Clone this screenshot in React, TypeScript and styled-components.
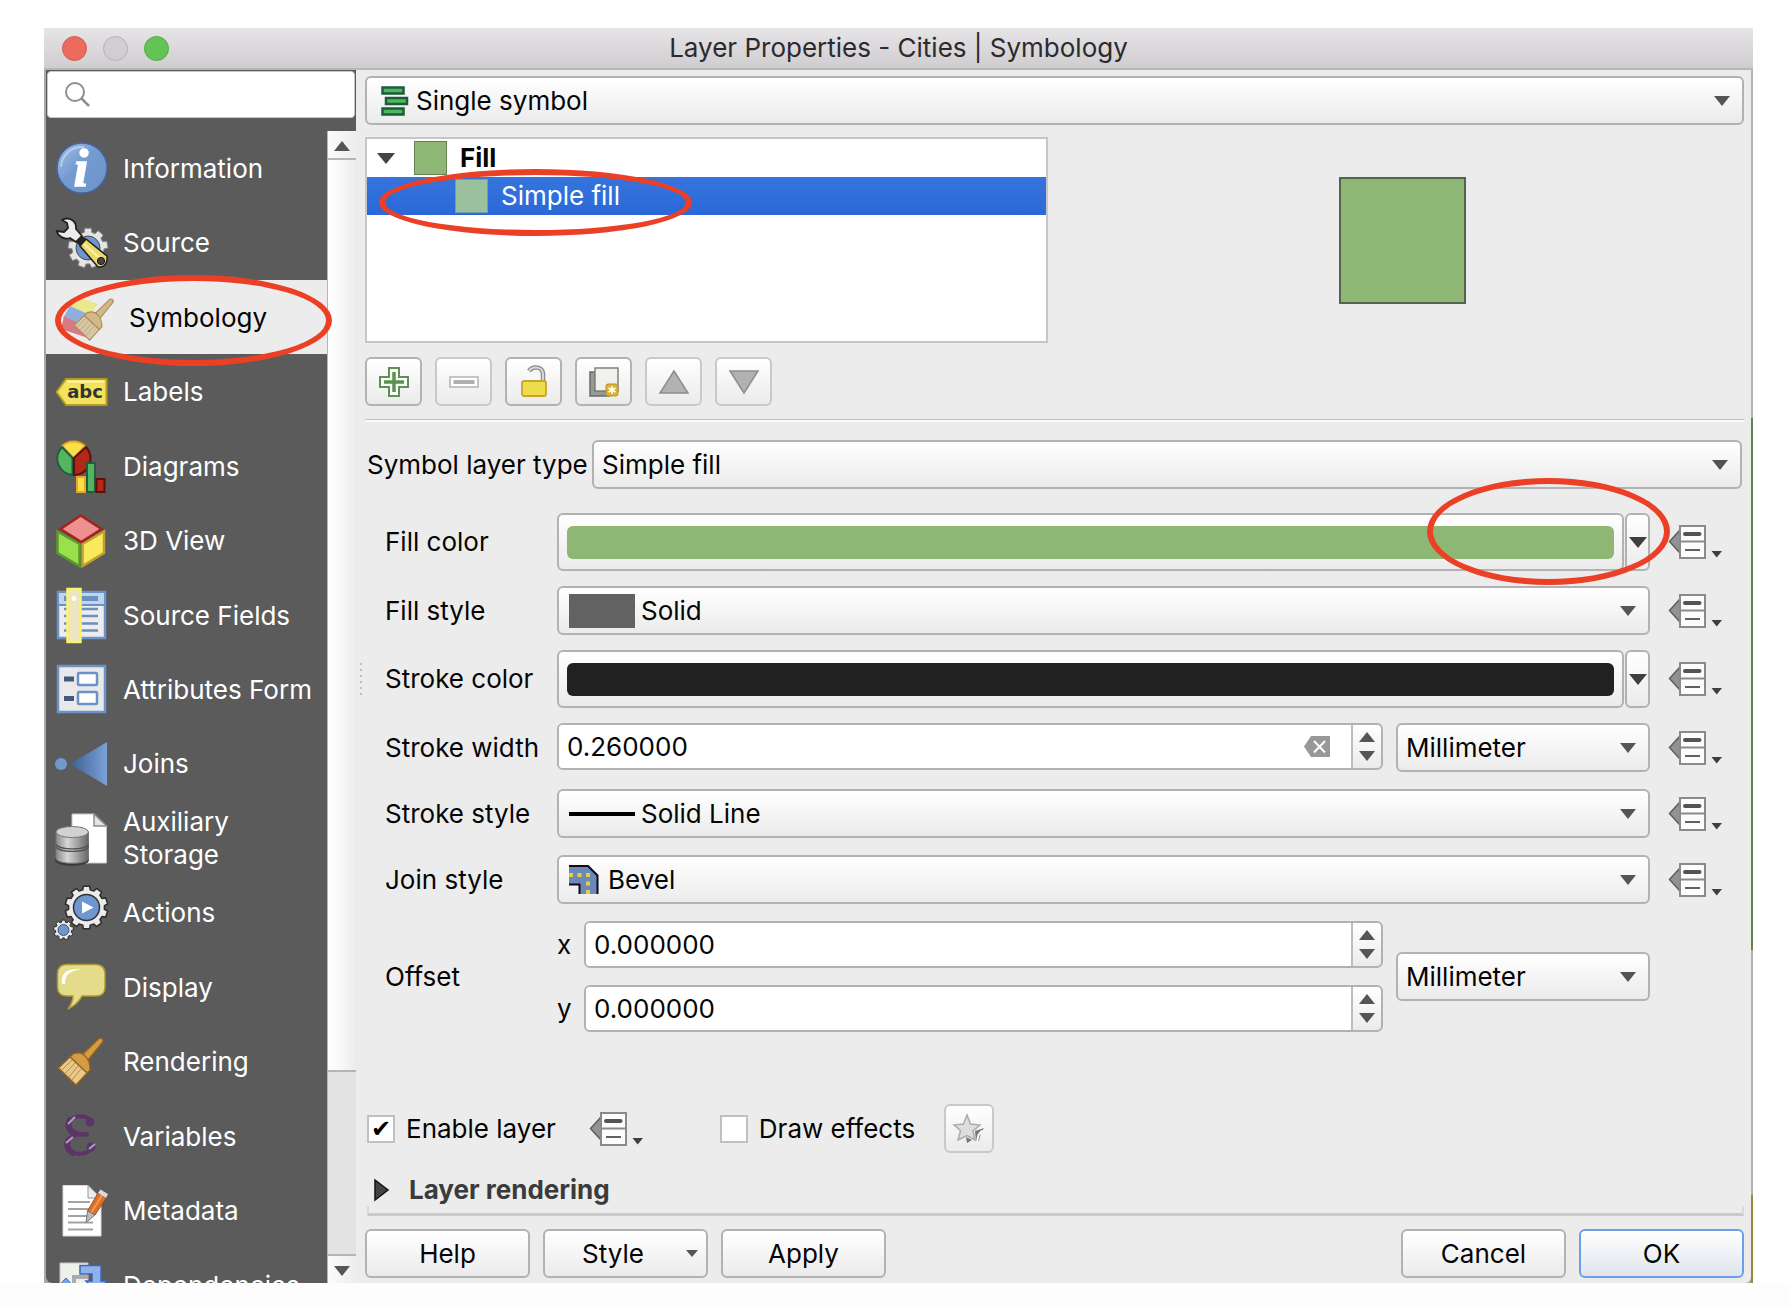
import React from "react";
import styled, { createGlobalStyle, css } from "styled-components";

const GlobalStyle = createGlobalStyle`
  *, *::before, *::after { box-sizing: border-box; }
  body { margin: 0; background: #fff; }
  body, button, input, select {
    font-family: Inter, "Liberation Sans", sans-serif;
    font-size: 26px;
    line-height: 32px;
    color: #050505;
  }
  button, input, select { margin: 0; padding: 0; border: 0; background: none; outline: none; }
  svg { display: block; overflow: visible; }
`;

/* ---------- window frame ---------- */

const Page = styled.div`
  min-height: 100vh;
  padding: 28px 37px 25px 44px;
  display: flex;
  background: linear-gradient(#fff 0 calc(100% - 25px), #fdfdfd calc(100% - 25px));
`;

const Window = styled.div`
  flex: 1;
  min-width: 0;
  display: flex;
  flex-direction: column;
  padding: 0 2px;
  background:
    linear-gradient(#d8d6d8 0 42px, #b4b4b4 42px 390px, #64814e 390px 922px, #b0b0b0 922px 1167px, #988741 1167px) right / 2px 100% no-repeat,
    #a8a8a8;
`;

const TitleBar = styled.header`
  height: 42px;
  margin: 0 -2px;
  display: grid;
  grid-template-columns: 1fr auto 1fr;
  align-items: center;
  padding: 0 18px;
  border-bottom: 2px solid #b8b6b8;
  background: linear-gradient(#e6e4e6, #cfcdcf);
`;

const Title = styled.h1`
  margin: 0;
  font-size: 26px;
  font-weight: 400;
  line-height: 32px;
  color: #2c2a2c;
`;

const Lights = styled.div`
  display: flex;
  gap: 16px;
`;

const Light = styled.button<{ $fill: string; $edge: string }>`
  width: 25px;
  height: 25px;
  border-radius: 50%;
  border: 1px solid ${(p) => p.$edge};
  background: ${(p) => p.$fill};
`;

const Body = styled.div`
  flex: 1;
  display: flex;
  background: #ececec;
  border-radius: 0 0 6px 6px;
  overflow: hidden;
`;

/* ---------- sidebar ---------- */

const Sidebar = styled.aside`
  width: 310px;
  flex: none;
  display: flex;
  flex-direction: column;
  background: #5b5b5b;
`;

const Search = styled.label`
  height: 47px;
  margin: 1px 1px 13px;
  padding: 0 17px;
  display: flex;
  align-items: center;
  gap: 10px;
  background: #fff;
  border: 1px solid #c8c8c8;
  border-radius: 4px;
`;

const SearchInput = styled.input`
  flex: 1;
  min-width: 0;
`;

const SidebarBody = styled.div`
  flex: 1;
  min-height: 0;
  display: flex;
`;

const NavArea = styled.div`
  position: relative;
  display: flex;
  flex: 1;
  min-width: 0;
`;

const NavList = styled.nav`
  flex: 1;
  display: grid;
  grid-template-rows: repeat(15, minmax(0, 1fr)) 35px;
  height: 100%;
  overflow: hidden;
`;

const NavItem = styled.a<{ $active?: boolean }>`
  min-height: 74px;
  display: flex;
  align-items: center;
  gap: 15px;
  padding-left: ${(p) => (p.$active ? 16 : 10)}px;
  line-height: 33px;
  text-decoration: none;
  color: ${(p) => (p.$active ? "#050505" : "#fff")};
  background: ${(p) => (p.$active ? "#ececec" : "transparent")};
  svg { flex: none; }
`;

const Scrollbar = styled.div`
  width: 29px;
  display: flex;
  flex-direction: column;
  border-left: 1px solid #b5b5b5;
  background: #e3e3e3;
`;

const ScrollButton = styled.button`
  height: 27px;
  padding-top: 3px;
  display: grid;
  place-items: center;
  background: linear-gradient(90deg, #fbfbfb, #ededed);
`;

const ScrollTrack = styled.div`
  flex: 1;
  padding-bottom: 182px;
  border-top: 2px solid #b5b5b5;
  border-bottom: 2px solid #b5b5b5;
`;

const ScrollThumb = styled.div`
  height: 100%;
  border-bottom: 2px solid #b5b5b5;
  background: linear-gradient(90deg, #fff, #fafafa 40%, #ebebeb);
`;

/* ---------- main panel ---------- */

const Main = styled.main`
  flex: 1;
  min-width: 0;
  display: flex;
  flex-direction: column;
  padding: 6px 7px 4px 9px;
`;

const raised = css`
  border: 2px solid #b2b2b2;
  border-radius: 6px;
  background: linear-gradient(#fff, #ebebeb);
`;

const ComboBox = styled.div`
  ${raised}
  flex: 1;
  min-width: 0;
  height: 49px;
  display: grid;
  grid-template-columns: minmax(0, 1fr) auto;
  align-items: center;
`;

const ComboSelect = styled.select<{ $pad: number }>`
  grid-area: 1 / 1 / 2 / 3;
  width: 100%;
  height: 100%;
  appearance: none;
  padding-left: ${(p) => p.$pad}px;
`;

const ComboIcon = styled.span`
  grid-area: 1 / 1;
  padding-left: 10px;
  pointer-events: none;
`;

const ComboArrow = styled.span`
  grid-area: 1 / 2;
  padding-right: 12px;
  pointer-events: none;
`;

const RendererRow = styled.div`
  display: flex;
`;

const TopSplit = styled.div`
  display: grid;
  grid-template-columns: 1fr 1fr;
  gap: 14px;
  margin: 12px 0 14px;
`;

const Tree = styled.ul`
  height: 206px;
  margin: 0;
  padding: 0;
  list-style: none;
  background: #fff;
  border: 2px solid #c6c6c6;
`;

const TreeRow = styled.li<{ $selected?: boolean }>`
  position: relative;
  height: 38px;
  display: flex;
  align-items: center;
  gap: 13px;
  padding-left: ${(p) => (p.$selected ? 88 : 10)}px;
  font-weight: ${(p) => (p.$selected ? 400 : 700)};
  color: ${(p) => (p.$selected ? "#fff" : "#050505")};
  background: ${(p) => (p.$selected ? "linear-gradient(#3674dc, #2b68d8)" : "none")};
`;

const TreeSwatch = styled.span<{ $fill: string; $edge: string }>`
  width: 33px;
  height: 34px;
  border: 1px solid ${(p) => p.$edge};
  background: ${(p) => p.$fill};
`;

const TreeToggle = styled.button`
  margin-right: 6px;
`;

const Preview = styled.div`
  display: grid;
  place-items: center;
`;

const PreviewSwatch = styled.div`
  width: 127px;
  height: 127px;
  border: 2px solid #56634d;
  background: #8eb674;
`;

const Toolbar = styled.div`
  display: flex;
  gap: 13px;
`;

const ToolButton = styled.button<{ $small?: boolean }>`
  ${raised}
  width: ${(p) => (p.$small ? 50 : 57)}px;
  height: 49px;
  display: grid;
  place-items: center;
  &:disabled { border-color: #c9c9c9; }
`;

const Divider = styled.hr`
  width: 100%;
  height: 3px;
  margin: 13px 0 18px;
  border: 0;
  border-top: 1px solid #c2c2c2;
  background: #fafafa;
`;

const TypeRow = styled.div`
  display: flex;
  align-items: center;
  padding: 0 2px;
  margin-bottom: 24px;
`;

const TypeLabel = styled.label`
  width: 225px;
  flex: none;
  white-space: nowrap;
`;

const FormArea = styled.div`
  display: grid;
  grid-template-columns: 20px minmax(0, 1fr);
  align-items: center;
`;

const Grip = styled.div`
  width: 2px;
  height: 36px;
  margin: 0 0 184px -5px;
  background: repeating-linear-gradient(#bcbcbc 0 2px, transparent 2px 6px);
`;

const FormBody = styled.div`
  display: flex;
  flex-direction: column;
  gap: 15px;
`;

const FormGroup = styled.div<{ $gap: number }>`
  display: flex;
  flex-direction: column;
  gap: ${(p) => p.$gap}px;
`;

const FormRow = styled.div`
  display: grid;
  grid-template-columns: 172px minmax(0, 1fr) 94px;
  align-items: center;
`;

const Field = styled.div`
  position: relative;
  min-width: 0;
  display: flex;
  gap: 1px;
`;

const SplitField = styled.div<{ $center?: boolean }>`
  display: grid;
  grid-template-columns: minmax(0, 1fr) 254px;
  gap: 13px;
  align-items: ${(p) => (p.$center ? "center" : "start")};
`;

const ColorButton = styled.button`
  ${raised}
  flex: 1;
  height: 58px;
  padding: 0 8px;
  display: flex;
  align-items: center;
`;

const ColorSwatch = styled.span<{ $fill: string }>`
  flex: 1;
  height: 33px;
  border-radius: 6px;
  background: ${(p) => p.$fill};
`;

const ColorMenu = styled.button`
  ${raised}
  width: 25px;
  height: 58px;
  display: flex;
  align-items: center;
  justify-content: center;
`;

const SpinBox = styled.div`
  ${raised}
  flex: 1;
  min-width: 0;
  height: 47px;
  display: flex;
  overflow: hidden;
`;

const SpinInput = styled.input`
  flex: 1;
  min-width: 0;
  padding-left: 8px;
  background: #fff;
`;

const ClearButton = styled.button`
  padding-right: 21px;
  background: #fff;
`;

const Stepper = styled.div`
  width: 30px;
  display: flex;
  flex-direction: column;
  justify-content: center;
  align-items: center;
  gap: 9px;
  border-left: 2px solid #bdbdbd;
`;

const StepButton = styled.button`
  display: block;
`;

const AxisList = styled.div`
  display: flex;
  flex-direction: column;
  gap: 17px;
`;

const AxisRow = styled.div`
  display: flex;
  align-items: center;
`;

const AxisLabel = styled.label`
  width: 27px;
`;

const OverrideButton = styled.button`
  width: 53px;
  margin-left: 19px;
`;

const OptionsRow = styled.div`
  height: 49px;
  margin-top: 72px;
  padding-left: 2px;
  display: flex;
  align-items: center;
`;

const CheckLabel = styled.label`
  display: flex;
  align-items: center;
  gap: 11px;
`;

const CheckBox = styled.input`
  appearance: none;
  width: 28px;
  height: 28px;
  border: 2px solid #c0c0c0;
  background: #fff;
  display: grid;
  place-items: center;
  &:checked::after {
    content: "✔";
    font-family: "DejaVu Sans", sans-serif;
    font-size: 24px;
    line-height: 24px;
    color: #000;
  }
`;

const OptionGap = styled.div<{ $w: number }>`
  width: ${(p) => p.$w}px;
`;

const RenderingToggle = styled.button`
  margin-top: 21px;
  height: 32px;
  padding-left: 9px;
  display: flex;
  align-items: center;
  gap: 20px;
  font-weight: 700;
  color: #3b3b3b;
`;

const Ledge = styled.div`
  height: 10px;
  margin: 0 0 13px 2px;
  border: 2px solid #dadada;
  border-top: 0;
  border-bottom: 3px solid #cacaca;
`;

const Footer = styled.footer`
  display: flex;
  gap: 13px;
`;

const FooterButton = styled.button<{ $primary?: boolean }>`
  ${raised}
  width: 165px;
  height: 49px;
  ${(p) =>
    p.$primary &&
    css`
      border-color: #6c9fe8;
      background: linear-gradient(#fff, #e0e4ec);
    `}
`;

const MenuFooterButton = styled(FooterButton)`
  display: flex;
  align-items: center;
  justify-content: space-between;
  padding: 0 8px 0 37px;
`;

const FooterSpace = styled.div`
  flex: 1;
`;

/* Hand-drawn ring laid over the control it points at */
const Ring = styled.span<{ $x: number; $y: number; $w: number; $h: number; $right?: boolean }>`
  position: absolute;
  z-index: 2;
  ${(p) => (p.$right ? "right" : "left")}: ${(p) => p.$x}px;
  top: ${(p) => p.$y}px;
  width: ${(p) => p.$w}px;
  height: ${(p) => p.$h}px;
  border: 6px solid #eb4025;
  border-radius: 50%;
  pointer-events: none;
`;

/* ---------- small glyphs ---------- */

const Tri = ({ w = 16, h = 10, up = false, fill = "#555" }: { w?: number; h?: number; up?: boolean; fill?: string }) => (
  <svg width={w} height={h} aria-hidden="true">
    <polygon points={up ? `0,${h} ${w / 2},0 ${w},${h}` : `0,0 ${w},0 ${w / 2},${h}`} fill={fill} />
  </svg>
);

const gear = (cx: number, cy: number, outer: number, inner: number, teeth: number) => {
  const pts: string[] = [];
  const step = (Math.PI * 2) / teeth;
  for (let i = 0; i < teeth; i++) {
    const a = i * step - Math.PI / 2;
    [
      [-0.33, inner],
      [-0.24, outer],
      [0.24, outer],
      [0.33, inner],
    ].forEach(([k, r]) => pts.push(`${(cx + r * Math.cos(a + k * step)).toFixed(1)},${(cy + r * Math.sin(a + k * step)).toFixed(1)}`));
  }
  return pts.join(" ");
};

const Icon = ({ children }: { children: React.ReactNode }) => (
  <svg width="52" height="52" viewBox="0 0 52 52" aria-hidden="true">
    {children}
  </svg>
);

const InfoIcon = () => (
  <Icon>
    <defs>
      <linearGradient id="infoShine" x1="0" y1="0" x2="1" y2="1">
        <stop offset="0" stopColor="#a5c0e6" />
        <stop offset="0.45" stopColor="#739bd1" />
        <stop offset="1" stopColor="#6c94cb" />
      </linearGradient>
    </defs>
    <circle cx="26" cy="26" r="25" fill="url(#infoShine)" stroke="#46669f" strokeWidth="1.5" />
    <path d="M5 25C6 12 16 4 28 5" fill="none" stroke="#b9cdea" strokeWidth="2" />
    <text x="25" y="44" textAnchor="middle" fontFamily="Liberation Serif, serif" fontStyle="italic" fontWeight="700" fontSize="52" fill="#fff" stroke="#fff" strokeWidth="1.6">
      i
    </text>
  </Icon>
);

const SourceIcon = () => (
  <Icon>
    <polygon points={gear(32, 31, 20, 16, 9)} fill="#e4e4e4" stroke="#8a8a8a" />
    <circle cx="32" cy="31" r="12" fill="#6f97cf" stroke="#4a4a4a" />
    <path d="M6 3C13-1 21 4 20 12L26 19L20 25L14 21C8 23 2 19 0.5 14L8 15L12 11L11 6Z" fill="#ececec" stroke="#222" strokeWidth="1.8" strokeLinejoin="round" />
    <path d="M20 25L26 19L30 22L24 29Z" fill="#222" />
    <path d="M24 29L30 22L51 39C52 45 49 51 42 50Z" fill="#ecd96a" stroke="#222" strokeWidth="1.6" />
    <path d="M28 27L46 43" stroke="#fbf2a8" strokeWidth="2" />
    <circle cx="45" cy="44" r="3.6" fill="#444" stroke="#111" />
  </Icon>
);

const Brush = ({ wood, dark, hair }: { wood: string; dark: string; hair: string }) => (
  <>
    <path d="M43 2.5Q47 1.5 47 5.5L32 24L26 19Z" fill={wood} stroke={dark} strokeWidth="1.3" />
    <path d="M17 18Q25 15 29 20Q34 24 34 34L31 37L14 21Z" fill={wood} stroke={dark} strokeWidth="1.3" />
    <path d="M14 21L31 37L20 49L2.5 32Z" fill={hair} stroke={dark} strokeWidth="1.3" />
    <path d="M16 24L6 34M19 27L9.5 37M22 30L13 41M25 33L16 44" stroke={dark} strokeWidth="1" opacity="0.6" />
  </>
);

const SymbologyIcon = () => (
  <Icon>
    <path d="M6 20L14 5L36 13L26 26Z" fill="#e9e88c" />
    <path d="M1 27L8 15L28 24L20 36Z" fill="#8fb0dc" />
    <path d="M-1 38L2 25L24 36L26 47Z" fill="#d97a80" />
    <g transform="translate(10 6) scale(0.88)">
      <Brush wood="#d3b98a" dark="#a98f60" hair="#d8c7a4" />
    </g>
  </Icon>
);

const LabelsIcon = () => (
  <Icon>
    <path d="M0.5 26L10 13H50.5V39H10Z" fill="#f3e35c" stroke="#b89a22" strokeWidth="2" strokeLinejoin="round" />
    <path d="M11 15.5H48" stroke="#fbf6ae" strokeWidth="2" />
    <text x="29" y="32" textAnchor="middle" fontFamily="DejaVu Sans, sans-serif" fontWeight="700" fontSize="18" fill="#333">
      abc
    </text>
  </Icon>
);

const DiagramsIcon = () => (
  <Icon>
    <path d="M17.5 18L6 6A17 17 0 0 1 29 6Z" fill="#fbdf46" stroke="#e8a62c" strokeWidth="2" />
    <path d="M16.5 18V35A16.5 16.5 0 0 1 6 7Z" fill="#55b45f" stroke="#215c3b" strokeWidth="2" />
    <path d="M18 18L30 7A16.5 16.5 0 0 1 18 35Z" fill="#b32917" stroke="#5f100c" strokeWidth="2" />
    <rect x="21" y="37" width="8" height="15" fill="#fbdf46" stroke="#e8a62c" strokeWidth="2" />
    <rect x="31" y="23" width="8" height="29" fill="#55b45f" stroke="#215c3b" strokeWidth="2" />
    <rect x="40.5" y="39" width="8" height="13" fill="#b32917" stroke="#5f100c" strokeWidth="2" />
  </Icon>
);

const CubeIcon = () => (
  <Icon>
    <path d="M1.5 16.5L23.5 29V51L1.5 38Z" fill="#9be04a" stroke="#5b9a2c" strokeWidth="2.5" />
    <path d="M26.5 29L48 16.5V38L26.5 51Z" fill="#fbe95c" stroke="#c0a030" strokeWidth="2.5" />
    <path d="M24.7 0.5L45.5 14L25.3 27L4.5 14Z" fill="#ec9090" stroke="#a3241a" strokeWidth="2.5" />
  </Icon>
);

const FieldsIcon = () => (
  <Icon>
    <rect x="2" y="3" width="47" height="46" fill="#ededed" stroke="#6c92c8" strokeWidth="2.5" />
    <rect x="3" y="4" width="45" height="11" fill="#bcd6ee" />
    <path d="M2 16H49" stroke="#6c92c8" strokeWidth="2" />
    <path d="M8 9.5H42" stroke="#6c8fc2" strokeWidth="5" />
    <path d="M8 20H42M8 27H42M8 34.5H42M8 41.5H42" stroke="#6f8fbd" strokeWidth="2.5" />
    <rect x="11.5" y="0" width="13" height="53" fill="#ece5bd" stroke="#fbf36a" strokeWidth="2.5" />
    <circle cx="18" cy="9.5" r="2.5" fill="#fff" />
  </Icon>
);

const FormIcon = () => (
  <Icon>
    <rect x="2" y="3" width="47" height="46" fill="#e9e9e9" stroke="#6c92c8" strokeWidth="2.5" />
    <rect x="22" y="10" width="19" height="12" rx="1" fill="#fff" stroke="#6c92c8" strokeWidth="2.5" />
    <rect x="22" y="29" width="19" height="12" rx="1" fill="#fff" stroke="#6c92c8" strokeWidth="2.5" />
    <path d="M8 16H18M8 35.5H18" stroke="#445877" strokeWidth="5" />
  </Icon>
);

const JoinsIcon = () => (
  <Icon>
    <defs>
      <linearGradient id="joinFade">
        <stop offset="0" stopColor="#3c5f93" />
        <stop offset="1" stopColor="#7ca1d6" />
      </linearGradient>
    </defs>
    <circle cx="5" cy="26" r="6" fill="#7199d0" />
    <path d="M14 26L51 4V48Z" fill="url(#joinFade)" />
  </Icon>
);

const StorageIcon = () => (
  <Icon>
    <defs>
      <linearGradient id="steel">
        <stop offset="0" stopColor="#888" />
        <stop offset="0.35" stopColor="#d6d6d6" />
        <stop offset="1" stopColor="#666" />
      </linearGradient>
    </defs>
    <path d="M16 2H38L50.5 14V51H16Z" fill="#fff" stroke="#c8c8c8" />
    <path d="M38 2V14H50.5Z" fill="#e4e4e4" stroke="#8d8d8d" strokeWidth="1.5" />
    <ellipse cx="16" cy="48" rx="17" ry="6" fill="#3c3c3c" />
    <path d="M0 20V46C0 53 32.5 53 32.5 46V20Z" fill="url(#steel)" stroke="#777" />
    <path d="M0 32C2 38.5 31 38.5 32.5 32M0 34.5C2 41 31 41 32.5 34.5" fill="none" stroke="#555" strokeWidth="1.2" />
    <ellipse cx="16.2" cy="20" rx="16.2" ry="5.5" fill="#d2d2d2" stroke="#777" />
  </Icon>
);

const ActionsIcon = () => (
  <Icon>
    <polygon points={gear(30.5, 20.5, 21.5, 18, 10)} fill="#ececec" stroke="#2c2c2c" strokeWidth="1.5" strokeLinejoin="round" />
    <circle cx="30.5" cy="20.5" r="13" fill="#6f97cf" stroke="#333" strokeWidth="1.5" />
    <path d="M26 14.5L37.5 20.5L26 26.5Z" fill="#fff" />
    <polygon points={gear(7.5, 43, 10, 8, 9)} fill="#ececec" stroke="#2c2c2c" />
    <circle cx="7.5" cy="43" r="5.5" fill="#6f97cf" stroke="#456" />
  </Icon>
);

const DisplayIcon = () => (
  <Icon>
    <path d="M11 3.5H39Q49 3.5 49 13V26Q49 35 40 35H26Q22 43 12 48Q17 41 17 35H11Q1.5 35 1.5 26V13Q1.5 3.5 11 3.5Z" fill="#e4dc8b" stroke="#ad9a35" strokeWidth="1.5" />
    <path d="M6 23C5 13 9 7 26 8.5C14 9.5 9 13 9 23Z" fill="#fff" />
  </Icon>
);

const RenderingIcon = () => (
  <Icon>
    <Brush wood="#d59b45" dark="#94661c" hair="#e9c88a" />
  </Icon>
);

/* Script epsilon drawn as two open bowls ending in round drops */
const VariablesIcon = () => (
  <Icon>
    <g fill="none" stroke="#5b3468" strokeLinecap="round">
      <path d="M34 10C28 4 15 5 13 14C12 21 20 25 31 24.500" strokeWidth="4" />
      <path d="M31 24.500C18 23 10 28 11 35C12 45 29 47 36 38" strokeWidth="4" />
      <path d="M14 10C11 15 13 20 17 22M12 31C10 37 13 41 17 43" strokeWidth="6" />
    </g>
    <circle cx="34" cy="12" r="4.5" fill="#5b3468" />
    <circle cx="35" cy="37" r="4.5" fill="#5b3468" />
    <path d="M12 14L19 7M10 33L17 27M33 39L39 34" stroke="#b79cc2" strokeWidth="2" />
  </Icon>
);

const MetadataIcon = () => (
  <Icon>
    <path d="M7 0.5H32L45 14V51H7Z" fill="#fff" stroke="#d8d8d8" />
    <path d="M32 0.5V13H45Z" fill="#ececec" stroke="#999" />
    <path d="M12 17H34M12 24H33M12 31H31M12 37.5H37M12 44.5H37" stroke="#a2a2a2" strokeWidth="2.2" />
    <path d="M42 8L50 13L39 30L31.5 26Z" fill="#dd6f2b" stroke="#a84d18" />
    <path d="M46 10.5L35 28" stroke="#f09a50" strokeWidth="2" />
    <path d="M42 8L44.5 4.5L52 9L50 13Z" fill="#d9d9d9" />
    <path d="M31.5 26L39 30L30 37.5Z" fill="#bdbdbd" stroke="#777" />
  </Icon>
);

const DependenciesIcon = () => (
  <Icon>
    <path d="M4 4H32V50H4Z" fill="#eef0ea" stroke="#c4c4c0" />
    <path d="M18 52V18H32" fill="none" stroke="#aaa" strokeWidth="4" />
    <path d="M24 6.5H45V22H51L41 34L30 22H36V15H24Z" fill="#8fb1ee" stroke="#3f66b4" strokeWidth="1.5" />
    <path d="M0 30L10 19L20 30Z" fill="#7aa2ea" stroke="#3f66b4" />
  </Icon>
);

const OverrideIcon = () => (
  <svg width="53" height="34" viewBox="0 0 53 34" aria-hidden="true">
    <path d="M11 5V28L0.5 16.5Z" fill="#909296" stroke="#5f5f5f" strokeWidth="1.5" />
    <rect x="11" y="1" width="25" height="32" fill="#fcfcfc" stroke="#8b8b86" strokeWidth="2" />
    <path d="M11 16.5H36" stroke="#8b8b86" strokeWidth="2" />
    <path d="M16 9H30.5" stroke="#525458" strokeWidth="4" strokeLinecap="round" />
    <path d="M16 25H31" stroke="#5f6165" strokeWidth="2" />
    <path d="M42.5 26H53L47.7 32.5Z" fill="#3e3e3e" />
  </svg>
);

const SingleSymbolIcon = () => (
  <svg width="31" height="30" viewBox="-4 0 31 30" aria-hidden="true">
    <g fill="#4fb85c" stroke="#1d5b3b" strokeWidth="2.5">
      <rect x="1.5" y="1.5" width="21" height="6" />
      <rect x="5" y="12" width="21" height="6" />
      <rect x="1.5" y="22.5" width="21" height="6" />
    </g>
  </svg>
);

const SolidIcon = () => (
  <svg width="67" height="34" aria-hidden="true">
    <rect width="66" height="34" fill="#626262" />
  </svg>
);

const LineIcon = () => (
  <svg width="67" height="4" aria-hidden="true">
    <rect width="66" height="4" fill="#000" />
  </svg>
);

const BevelIcon = () => (
  <svg width="29" height="29" viewBox="0 0 29 29" aria-hidden="true">
    <path d="M0 1H19L28 10V29H10V19H0Z" fill="#6c88ba" />
    <path d="M0 1H19L28.5 10.5V29M0 19.5H10.5V29" fill="none" stroke="#0c0c0c" strokeWidth="2" />
    <g fill="#e2cf3a">
      <rect x="0" y="8" width="4" height="4" />
      <rect x="8.5" y="8" width="4" height="4" />
      <rect x="17" y="8" width="4" height="4" />
      <rect x="17" y="16.5" width="4" height="4" />
      <rect x="17" y="25" width="4" height="4" />
    </g>
  </svg>
);

const ClearIcon = () => (
  <svg width="26" height="21" viewBox="0 0 26 21" aria-hidden="true">
    <path d="M0 10.5L7 0H26V21H7Z" fill="#989898" />
    <path d="M10 5L21 16.5M21 5L10 16.5" stroke="#fff" strokeWidth="2" />
  </svg>
);

const PlusIcon = () => (
  <svg width="30" height="30" viewBox="0 0 30 30" aria-hidden="true">
    <path d="M10 1H20V10H29V20H20V29H10V20H1V10H10Z" fill="#fff" stroke="#5d9154" strokeWidth="2" />
    <path d="M15 5V25M5 15H25" stroke="#5a9150" strokeWidth="3.5" />
  </svg>
);

const MinusIcon = () => (
  <svg width="30" height="12" viewBox="0 0 30 12" aria-hidden="true">
    <rect x="1" y="1" width="28" height="10" fill="#fff" stroke="#b4b4b4" strokeWidth="1.5" />
    <rect x="4.5" y="4" width="21" height="4" fill="#b0b0b0" />
  </svg>
);

const LockIcon = () => (
  <svg width="26" height="31" viewBox="0 0 26 31" aria-hidden="true">
    <path d="M8 5C12-1 22 1 22 8V15" fill="none" stroke="#8c8c88" strokeWidth="4.5" />
    <path d="M8 5C12-1 22 1 22 8V15" fill="none" stroke="#d8d8d4" strokeWidth="2" />
    <rect x="1" y="15" width="24" height="15" rx="2" fill="#eede4c" stroke="#c7a52e" strokeWidth="1.8" />
  </svg>
);

const DuplicateIcon = () => (
  <svg width="30" height="30" viewBox="0 0 30 30" aria-hidden="true">
    <path d="M1 5H6V24H20V29H1Z" fill="#9a9a94" stroke="#6b6b66" strokeWidth="1.5" />
    <rect x="6" y="1" width="23" height="23" fill="#f0f0ec" stroke="#82827c" strokeWidth="1.5" />
    <rect x="17" y="17" width="12" height="12" rx="2" fill="#dcb52f" stroke="#b8922a" />
    <path d="M23 19V27M19.5 21L26.5 25M26.5 21L19.5 25" stroke="#fff" strokeWidth="1.5" />
  </svg>
);

const MoveIcon = ({ down }: { down?: boolean }) => (
  <svg width="30" height="24" viewBox="0 0 30 24" aria-hidden="true">
    <path d={down ? "M1 1H29L15 23Z" : "M1 23H29L15 1Z"} fill="#b2b2b2" stroke="#8d8d8d" strokeWidth="1.5" />
  </svg>
);

const EffectsIcon = () => (
  <svg width="32" height="32" viewBox="0 0 32 32" aria-hidden="true">
    <path d="M13 24L19 27L14 30Z" fill="#777" />
    <path d="M22 18L31 15L28 19L26 28L23 29Z" fill="#777" />
    <path d="M14 2L17.5 11L27 12L20 18L22 27L14 22.5L5 27L7.5 17.5L1 12L10.5 11Z" fill="#dedede" stroke="#ababab" strokeWidth="1.5" />
    <path d="M24 29L25.500 22L29 17.500" fill="none" stroke="#fff" strokeWidth="2" />
  </svg>
);

/* ---------- composed controls ---------- */

const Combo = ({ id, label, value, icon, pad = 8 }: { id: string; label?: string; value: string; icon?: React.ReactNode; pad?: number }) => (
  <ComboBox>
    <ComboSelect id={id} $pad={pad} aria-label={label} defaultValue={value}>
      <option>{value}</option>
    </ComboSelect>
    {icon && <ComboIcon>{icon}</ComboIcon>}
    <ComboArrow>
      <Tri />
    </ComboArrow>
  </ComboBox>
);

const Spin = ({ id, value, clearable }: { id: string; value: string; clearable?: boolean }) => (
  <SpinBox>
    <SpinInput id={id} type="text" inputMode="decimal" defaultValue={value} />
    {clearable && (
      <ClearButton type="button" aria-label="Clear value">
        <ClearIcon />
      </ClearButton>
    )}
    <Stepper>
      <StepButton type="button" aria-label="Increase">
        <Tri up />
      </StepButton>
      <StepButton type="button" aria-label="Decrease">
        <Tri />
      </StepButton>
    </Stepper>
  </SpinBox>
);

const Override = () => (
  <OverrideButton type="button" aria-label="Data defined override">
    <OverrideIcon />
  </OverrideButton>
);

const ColorRow = ({ id, label, fill, ring }: { id: string; label: string; fill: string; ring?: React.ReactNode }) => (
  <FormRow>
    <label htmlFor={id}>{label}</label>
    <Field>
      <ColorButton id={id} type="button">
        <ColorSwatch $fill={fill} />
      </ColorButton>
      <ColorMenu type="button" aria-label={`${label} options`}>
        <Tri w={18} h={11} fill="#3f3f3f" />
      </ColorMenu>
      {ring}
    </Field>
    <Override />
  </FormRow>
);

const ComboRow = ({ id, label, value, icon, pad }: { id: string; label: string; value: string; icon?: React.ReactNode; pad?: number }) => (
  <FormRow>
    <label htmlFor={id}>{label}</label>
    <Combo id={id} value={value} icon={icon} pad={pad} />
    <Override />
  </FormRow>
);

const sections: { name: string; icon: () => React.ReactElement }[] = [
  { name: "Information", icon: InfoIcon },
  { name: "Source", icon: SourceIcon },
  { name: "Symbology", icon: SymbologyIcon },
  { name: "Labels", icon: LabelsIcon },
  { name: "Diagrams", icon: DiagramsIcon },
  { name: "3D View", icon: CubeIcon },
  { name: "Source Fields", icon: FieldsIcon },
  { name: "Attributes Form", icon: FormIcon },
  { name: "Joins", icon: JoinsIcon },
  { name: "Auxiliary Storage", icon: StorageIcon },
  { name: "Actions", icon: ActionsIcon },
  { name: "Display", icon: DisplayIcon },
  { name: "Rendering", icon: RenderingIcon },
  { name: "Variables", icon: VariablesIcon },
  { name: "Metadata", icon: MetadataIcon },
  { name: "Dependencies", icon: DependenciesIcon },
];

export default function App() {
  return (
    <Page>
      <GlobalStyle />
      <Window>
        <TitleBar>
          <Lights>
            <Light type="button" aria-label="Close" $fill="#ed6a5f" $edge="#d35b51" />
            <Light type="button" aria-label="Minimize" $fill="#d0ced0" $edge="#b4b2b4" />
            <Light type="button" aria-label="Zoom" $fill="#61c454" $edge="#53a948" />
          </Lights>
          <Title>Layer Properties - Cities | Symbology</Title>
        </TitleBar>
        <Body>
          <Sidebar>
            <Search>
              <svg width="25" height="25" viewBox="0 0 25 25" aria-hidden="true">
                <circle cx="10" cy="10" r="9" fill="none" stroke="#8f8f8f" strokeWidth="2" />
                <path d="M16.5 16.5L24 24" stroke="#8f8f8f" strokeWidth="2.5" />
              </svg>
              <SearchInput type="search" aria-label="Search" />
            </Search>
            <SidebarBody>
              <NavArea>
                <NavList>
                  {sections.map(({ name, icon: Glyph }) => (
                    <NavItem key={name} href="#" $active={name === "Symbology"}>
                      <Glyph />
                      {name}
                    </NavItem>
                  ))}
                </NavList>
                <Ring $x={9} $y={144} $w={277} $h={91} />
              </NavArea>
              <Scrollbar>
                <ScrollButton type="button" aria-label="Scroll up">
                  <Tri up />
                </ScrollButton>
                <ScrollTrack>
                  <ScrollThumb />
                </ScrollTrack>
                <ScrollButton type="button" aria-label="Scroll down">
                  <Tri />
                </ScrollButton>
              </Scrollbar>
            </SidebarBody>
          </Sidebar>

          <Main>
            <RendererRow>
              <Combo id="renderer" label="Renderer" value="Single symbol" icon={<SingleSymbolIcon />} pad={49} />
            </RendererRow>

            <TopSplit>
              <Tree>
                <TreeRow>
                  <TreeToggle type="button" aria-label="Collapse Fill">
                    <Tri w={18} h={11} fill="#444" />
                  </TreeToggle>
                  <TreeSwatch $fill="#8eb674" $edge="#66804f" />
                  Fill
                </TreeRow>
                <TreeRow $selected>
                  <TreeSwatch $fill="#9bc09d" $edge="#6f9fae" />
                  Simple fill
                  <Ring $x={12} $y={-8} $w={313} $h={67} />
                </TreeRow>
              </Tree>
              <Preview>
                <PreviewSwatch />
              </Preview>
            </TopSplit>

            <Toolbar>
              <ToolButton type="button" aria-label="Add symbol layer">
                <PlusIcon />
              </ToolButton>
              <ToolButton type="button" aria-label="Remove symbol layer" disabled>
                <MinusIcon />
              </ToolButton>
              <ToolButton type="button" aria-label="Lock layer color">
                <LockIcon />
              </ToolButton>
              <ToolButton type="button" aria-label="Duplicate layer">
                <DuplicateIcon />
              </ToolButton>
              <ToolButton type="button" aria-label="Move up" disabled>
                <MoveIcon />
              </ToolButton>
              <ToolButton type="button" aria-label="Move down" disabled>
                <MoveIcon down />
              </ToolButton>
            </Toolbar>

            <Divider />

            <TypeRow>
              <TypeLabel htmlFor="layer-type">Symbol layer type</TypeLabel>
              <Combo id="layer-type" value="Simple fill" />
            </TypeRow>

            <FormArea>
              <Grip />
              <FormBody>
                <FormGroup $gap={15}>
                  <ColorRow
                    id="fill-color"
                    label="Fill color"
                    fill="#8eb674"
                    ring={<Ring $right $x={-20} $y={-35} $w={243} $h={107} />}
                  />
                  <ComboRow id="fill-style" label="Fill style" value="Solid" icon={<SolidIcon />} pad={82} />
                  <ColorRow id="stroke-color" label="Stroke color" fill="#212121" />
                </FormGroup>
                <FormGroup $gap={17}>
                  <FormRow>
                    <label htmlFor="stroke-width">Stroke width</label>
                    <SplitField>
                      <Spin id="stroke-width" value="0.260000" clearable />
                      <Combo id="stroke-unit" label="Stroke width unit" value="Millimeter" />
                    </SplitField>
                    <Override />
                  </FormRow>
                  <ComboRow id="stroke-style" label="Stroke style" value="Solid Line" icon={<LineIcon />} pad={82} />
                  <ComboRow id="join-style" label="Join style" value="Bevel" icon={<BevelIcon />} pad={49} />
                  <FormRow>
                    <span>Offset</span>
                    <SplitField $center>
                      <AxisList>
                        <AxisRow>
                          <AxisLabel htmlFor="offset-x">x</AxisLabel>
                          <Spin id="offset-x" value="0.000000" />
                        </AxisRow>
                        <AxisRow>
                          <AxisLabel htmlFor="offset-y">y</AxisLabel>
                          <Spin id="offset-y" value="0.000000" />
                        </AxisRow>
                      </AxisList>
                      <Combo id="offset-unit" label="Offset unit" value="Millimeter" />
                    </SplitField>
                  </FormRow>
                </FormGroup>
              </FormBody>
            </FormArea>

            <OptionsRow>
              <CheckLabel>
                <CheckBox type="checkbox" defaultChecked />
                Enable layer
              </CheckLabel>
              <OptionGap $w={15} />
              <Override />
              <OptionGap $w={77} />
              <CheckLabel>
                <CheckBox type="checkbox" />
                Draw effects
              </CheckLabel>
              <OptionGap $w={29} />
              <ToolButton $small type="button" aria-label="Customize effects" disabled>
                <EffectsIcon />
              </ToolButton>
            </OptionsRow>

            <RenderingToggle type="button" aria-expanded="false">
              <svg width="15" height="22" aria-hidden="true">
                <path d="M1 1L14 11L1 21Z" fill="#444" stroke="#111" strokeWidth="1.5" />
              </svg>
              Layer rendering
            </RenderingToggle>
            <Ledge />

            <Footer>
              <FooterButton type="button">Help</FooterButton>
              <MenuFooterButton type="button">
                Style
                <Tri w={12} h={7} />
              </MenuFooterButton>
              <FooterButton type="button">Apply</FooterButton>
              <FooterSpace />
              <FooterButton type="button">Cancel</FooterButton>
              <FooterButton type="button" $primary>
                OK
              </FooterButton>
            </Footer>
          </Main>
        </Body>
      </Window>
    </Page>
  );
}
